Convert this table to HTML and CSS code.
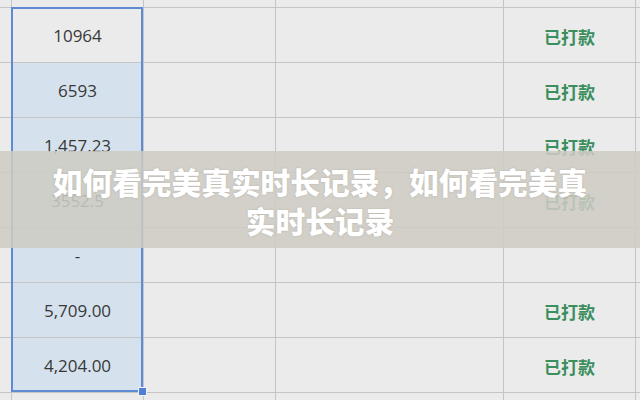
FILE: index.html
```html
<!DOCTYPE html>
<html lang="zh-CN">
<head>
<meta charset="utf-8">
<title>如何看完美真实时长记录</title>
<link rel="stylesheet" href="styles.css">
</head>
<body>
<div class="stage">
  <div class="sheet">
    <div class="c"></div><div class="c"></div><div class="c"></div><div class="c"></div><div class="c"></div><div class="c"></div>

    <div class="c"></div><div class="c num">10964</div><div class="c"></div><div class="c"></div><div class="c st">已打款</div><div class="c"></div>
    <div class="c"></div><div class="c num sel">6593</div><div class="c"></div><div class="c"></div><div class="c st">已打款</div><div class="c"></div>
    <div class="c"></div><div class="c num sel">1,457.23</div><div class="c"></div><div class="c"></div><div class="c st">已打款</div><div class="c"></div>
    <div class="c"></div><div class="c num sel">3552.5</div><div class="c"></div><div class="c"></div><div class="c st">已打款</div><div class="c"></div>
    <div class="c"></div><div class="c num sel">-</div><div class="c"></div><div class="c"></div><div class="c st"></div><div class="c"></div>
    <div class="c"></div><div class="c num sel">5,709.00</div><div class="c"></div><div class="c"></div><div class="c st">已打款</div><div class="c"></div>
    <div class="c"></div><div class="c num sel">4,204.00</div><div class="c"></div><div class="c"></div><div class="c st">已打款</div><div class="c"></div>

    <div class="c"></div><div class="c"></div><div class="c"></div><div class="c"></div><div class="c"></div><div class="c"></div>
  </div>
  <div class="selection"><span class="handle"></span></div>
  <div class="banner">
    <h1 class="title">如何看完美真实时长记录，如何看完美真实时长记录</h1>
  </div>
</div>
</body>
</html>
```

FILE: styles.css
```css
html, body {
  margin: 0;
  padding: 0;
  background: #ebebeb;
}

.stage {
  position: relative;
  width: 640px;
  height: 400px;
  overflow: hidden;
  background: #ebebeb;
}

.sheet {
  display: grid;
  grid-template-columns: 12px 132px 132px 228px 132px 20px;
  grid-template-rows: 8px repeat(7, 55px) 20px;
}

.c {
  box-sizing: border-box;
  border-right: 1px solid #c5c5c5;
  border-bottom: 1px solid #c5c5c5;
  background: #ebebeb;
  display: flex;
  align-items: center;
  justify-content: center;
}

.num {
  font-family: "Open Sans", "Noto Sans", sans-serif;
  font-size: 17px;
  color: #383838;
}

.sel {
  background: #d5e2ed;
}

.st {
  font-family: "Noto Sans CJK SC", "Noto Sans", sans-serif;
  font-weight: 700;
  font-size: 17px;
  color: #3b8e5d;
  padding-top: 3px;
}

.selection {
  position: absolute;
  left: 11px;
  top: 7px;
  width: 132px;
  height: 385px;
  box-sizing: border-box;
  border: 2px solid #5f8ad4;
}

.handle {
  position: absolute;
  right: -6px;
  bottom: -6px;
  width: 7px;
  height: 7px;
  background: #4f7fd6;
  border: 1px solid #f2f2f2;
}

.banner {
  position: absolute;
  left: 0;
  top: 151px;
  width: 640px;
  height: 97px;
  background: rgba(206, 203, 195, 0.87);
  display: flex;
  align-items: center;
  justify-content: center;
}

.title {
  margin: 0;
  width: 560px;
  text-align: center;
  font-family: "Noto Sans CJK SC", sans-serif;
  font-weight: 900;
  font-size: 29.7px;
  line-height: 39px;
  color: #ffffff;
  padding-top: 3px;
  text-shadow: 0 0 2px rgba(120, 115, 105, 0.35);
}
```
